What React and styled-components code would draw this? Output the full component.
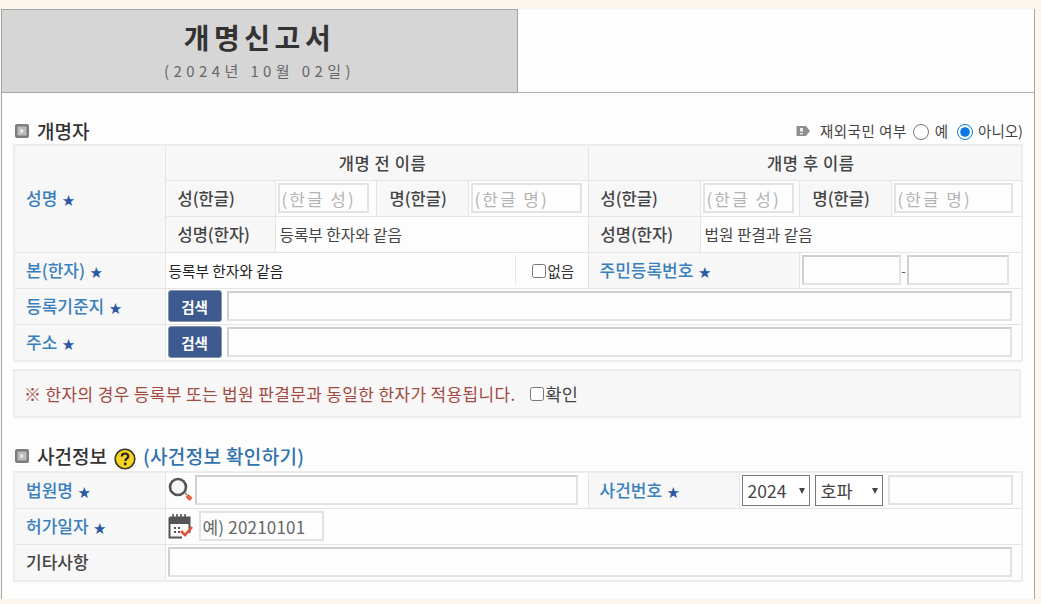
import React from "react";
import styled, { createGlobalStyle } from "styled-components";

const Global = createGlobalStyle`
  html, body { margin: 0; padding: 0; background: #fbf7ef; }
  body { font-family: "Noto Sans CJK KR", "Noto Sans", sans-serif; color: #333; }
  * { box-sizing: border-box; }
`;

const Sheet = styled.div`
  width: 1034px; height: 590px; margin: 9px 0 0 1px; background: #fdfdfd;
  border-right: 1px solid #a5a5a5; border-left: 1px solid #a5a5a5;
  display: flex; flex-direction: column;
`;
const TitleBox = styled.header`
  width: 517px; height: 84px; background: #d6d6d6; margin-left: -1px;
  border: 1px solid #a3a3a3; text-align: center; display: flex; flex-direction: column; align-items: center;
`;
const Title = styled.h1`
  margin: 7px 0 0; font-size: 28px; line-height: 40px; font-weight: 700; letter-spacing: 4.5px; color: #333;
`;
const SubTitle = styled.div`
  margin-top: 4px; font-size: 15px; line-height: 20px; letter-spacing: 4.4px; color: #666;
`;
const TitleRule = styled.div`height: 1px; background: #b5b5b5; margin: -1px 0 0 516px;`;
const Body = styled.main`padding: 26px 12px 0 11px;`;
const SectionHead = styled.div`
  height: 25px; padding: 0 0 2px 2px; display: flex; align-items: center; justify-content: space-between;
`;
const HeadLeft = styled.div`display: flex; align-items: center; gap: 7px;`;
const SectionTitle = styled.h2`margin: 0 0 0 1px; font-size: 19px; line-height: 24px; font-weight: 500; color: #333;`;
const HelpLink = styled.a`font-size: 19px; font-weight: 500; color: #2f72ad; letter-spacing: .35px; white-space: nowrap;`;
const Abroad = styled.div`
  display: flex; align-items: center; font-size: 14.5px; color: #444; margin-right: -1px;
`;
const AbroadText = styled.span`
  margin: 0 ${p => p.$mr ?? 6}px 0 ${p => p.$ml || 0}px; letter-spacing: ${p => p.$ls || 0}px; white-space: nowrap;
`;
const Radio = styled.input.attrs({ type: "radio" })`
  width: 16px; height: 16px; margin: 2px ${p => p.$mr ?? 6}px 0 0; accent-color: #0a78e0;
`;
const Check = styled.input.attrs({ type: "checkbox" })`
  width: 14px; height: 14px; margin: 2px 2px 0 0; flex: none;
`;
const Grid = styled.table`
  width: 1008px; table-layout: fixed; border-collapse: collapse; border: 2px solid #ececec;
`;
const Cell = styled.td`
  height: ${p => p.$h || 36}px; padding: 0; border: 1px solid #e4e4e4; font-size: 15px; vertical-align: middle;
  background: #fdfdfd;
`;
const Head = styled(Cell).attrs({ as: "th" })`
  font-weight: 500; font-size: 16.5px; color: #444; text-align: ${p => p.$center ? "center" : "left"};
  padding-left: ${p => p.$pl ?? 12}px; letter-spacing: ${p => p.$center ? .6 : 0}px; white-space: nowrap;
  background: #f7f7f7 repeating-conic-gradient(#f4f4f4 0 25%, #fafafa 0 50%) 0 0 / 2px 2px;
`;
const LabelHead = styled(Head)`font-size: 17px; font-weight: 500; padding-bottom: 2px;`;
const Req = styled.span`color: #3a7fbd;`;
const Star = styled.span`color: #2a58a3; font-size: 12.5px; margin-left: 5px;`;
const Value = styled.div`padding-left: 4px; font-size: 15.7px; color: #444; white-space: nowrap;`;
const Split = styled.div`display: flex; align-items: center; height: 100%;`;
const SmallValue = styled.div`flex: 1; padding-left: 3px; font-size: 14.7px; color: #222; white-space: nowrap;`;
const NoneBox = styled.label`
  width: 73px; height: 30px; border-left: 1px solid #e8e8e8; display: flex; align-items: center;
  padding-left: 16px; font-size: 14.5px; color: #333;
`;
const Inner = styled.div`display: flex; align-items: center; padding-left: ${p => p.$pl ?? 2}px;`;
const Input = styled.input`
  display: block; width: ${p => p.$w}px; height: 30px; flex: none; padding: 0 2px;
  font: 17px "Noto Sans CJK KR", sans-serif; color: #555; background: #fdfdfd;
  border: 2px solid #e2e2e2; ${p => p.$inset && "border-top-color:#d0d0d0;border-left-color:#d0d0d0;"}
  &::placeholder { color: ${p => p.$dark ? "#666" : "#b4b4b4"}; letter-spacing: ${p => p.$dark ? .2 : 2}px; opacity: 1; }
`;
const SearchBtn = styled.button`
  width: 54px; height: 32px; flex: none; margin-right: 5px; border: 1px solid #8a93a5; border-radius: 3px;
  background: #3c5a8f; color: #fff; font: 700 14.5px "Noto Sans CJK KR", sans-serif; padding: 0;
`;
const Dash = styled.span`width: 6px; color: #555; font-size: 13px; text-align: center;`;
const Notice = styled.div`
  width: 1008px; height: 49px; margin-top: 7px; padding: 0 0 1px 9px; display: flex; align-items: center;
  border: 2px solid #ececec; font-size: 17px; letter-spacing: .35px; color: #a3493f; white-space: nowrap;
  background: #f7f7f7 repeating-conic-gradient(#f4f4f4 0 25%, #fafafa 0 50%) 0 0 / 2px 2px;
`;
const Confirm = styled.label`display: flex; align-items: center; margin-left: 14px; color: #444; font-size: 17.5px; letter-spacing: 0;`;
const CaseHead = styled(SectionHead)`margin-top: 26px; justify-content: flex-start;`;
const CaseGrid = styled(Grid)`margin-top: 2px;`;
const Select = styled.select`
  width: ${p => p.$w}px; height: 31px; margin-right: 5px; flex: none; appearance: none; padding: 0 0 0 5px;
  border: 1px solid #777; border-radius: 0; color: #444; background: #fff; font: 17.5px "Noto Sans CJK KR", sans-serif;
`;
const SelectWrap = styled.div`
  position: relative; flex: none;
  &::after { content: ""; position: absolute; right: 10px; top: 13px; border: 3.5px solid transparent; border-top: 6px solid #444; border-bottom: 0; }
`;
const IconSlot = styled.span`display: flex; flex: none; margin: ${p => p.$mt || 0}px ${p => p.$mr || 0}px 0 0;`;

const Bullet = () => (
  <svg width="14" height="14" viewBox="0 0 14 14">
    <rect width="14" height="14" rx="2" fill="#7d7d7d" />
    <rect x="2.5" y="2.5" width="9" height="9" fill="#bcbcbc" />
    <path d="M5.5 4.5 9 7l-3.5 2.5z" fill="#f2f2f2" />
  </svg>
);
const Tag = () => (
  <svg width="15" height="12" viewBox="0 0 15 12">
    <path d="M1.5 1h8.5l4 5-4 5H1.5A1 1 0 0 1 .5 10V2a1 1 0 0 1 1-1z" fill="#8f8f8f" />
    <rect x="4" y="3" width="3" height="3.5" fill="#eee" />
    <rect x="4" y="8" width="3" height="1.3" fill="#eee" />
  </svg>
);
const Help = () => (
  <svg width="22" height="22" viewBox="0 0 22 22">
    <circle cx="11" cy="11" r="9.8" fill="#f7d322" stroke="#3a3a2a" strokeWidth="1.6" />
    <path d="M7.8 8.6c0-2 1.4-3.1 3.3-3.1s3.2 1 3.2 2.8c0 2.4-3 2.4-3 4.7" fill="none" stroke="#222" strokeWidth="2.2" />
    <circle cx="11.2" cy="16" r="1.4" fill="#222" />
  </svg>
);
const Magnifier = () => (
  <svg width="25" height="26" viewBox="0 0 25 26">
    <circle cx="10" cy="10" r="8" fill="#f6f6f6" stroke="#555" strokeWidth="2.6" />
    <path d="M17 16l2 2" stroke="#999" strokeWidth="2" />
    <path d="M19 18.5l4 4" stroke="#ee5a3c" strokeWidth="4" />
  </svg>
);
const Calendar = () => (
  <svg width="25" height="27" viewBox="0 0 25 27">
    <path d="M2 4h19v7H2z" fill="#555" />
    <path d="M5 1v5M9 1v5M13 1v5M17 1v5" stroke="#555" strokeWidth="1.6" />
    <path d="M1.5 4.5h20V20M1.5 4.5V24.5H14" fill="none" stroke="#555" strokeWidth="2" />
    <path d="M6 14h2v2H6zM10 14h2v2h-2zM6 18h2v2H6zM10 18h2v2h-2z" fill="#555" />
    <path d="M13 18l4 4 7-8" fill="none" stroke="#e8503a" strokeWidth="2.6" />
  </svg>
);

const Label = ({ children, h, rowSpan, colSpan }) => (
  <LabelHead $pl={11} $h={h} rowSpan={rowSpan} colSpan={colSpan}>
    <Req>{children}</Req><Star>★</Star>
  </LabelHead>
);

export default function App() {
  return (
    <>
      <Global />
      <Sheet>
        <TitleBox>
          <Title>개명신고서</Title>
          <SubTitle>(2024년 10월 02일)</SubTitle>
        </TitleBox>
        <TitleRule />
        <Body>
          <SectionHead>
            <HeadLeft><Bullet /><SectionTitle>개명자</SectionTitle></HeadLeft>
            <Abroad>
              <Tag />
              <AbroadText $ml={9} $mr={6} $ls={0.5}>재외국민 여부</AbroadText>
              <Radio name="abroad" $mr={6} />
              <AbroadText $mr={9}>예</AbroadText>
              <Radio name="abroad" $mr={5} defaultChecked />
              <AbroadText $mr={0}>아니오)</AbroadText>
            </Abroad>
          </SectionHead>
          <Grid>
            <colgroup>
              {[151, 110, 101, 92, 120, 112, 99, 92, 131].map((w, i) => <col key={i} width={w} />)}
            </colgroup>
            <tbody>
              <tr>
                <Label rowSpan={3} h={35}>성명</Label>
                <Head $center colSpan={4} $h={35}>개명 전 이름</Head>
                <Head $center colSpan={4} $h={35}>개명 후 이름</Head>
              </tr>
              <tr>
                <Head>성(한글)</Head>
                <Cell><Inner><Input $w={91} placeholder="(한글 성)" /></Inner></Cell>
                <Head $pl={13}>명(한글)</Head>
                <Cell><Inner><Input $w={111} placeholder="(한글 명)" /></Inner></Cell>
                <Head>성(한글)</Head>
                <Cell><Inner><Input $w={91} placeholder="(한글 성)" /></Inner></Cell>
                <Head $pl={13}>명(한글)</Head>
                <Cell><Inner><Input $w={119} placeholder="(한글 명)" /></Inner></Cell>
              </tr>
              <tr>
                <Head>성명(한자)</Head>
                <Cell colSpan={3}><Value>등록부 한자와 같음</Value></Cell>
                <Head>성명(한자)</Head>
                <Cell colSpan={3}><Value>법원 판결과 같음</Value></Cell>
              </tr>
              <tr>
                <Label>본(한자)</Label>
                <Cell colSpan={4}>
                  <Split>
                    <SmallValue>등록부 한자와 같음</SmallValue>
                    <NoneBox><Check />없음</NoneBox>
                  </Split>
                </Cell>
                <Label colSpan={2}>주민등록번호</Label>
                <Cell colSpan={2}>
                  <Inner><Input $w={99} $inset /><Dash>-</Dash><Input $w={102} $inset /></Inner>
                </Cell>
              </tr>
              <tr>
                <Label>등록기준지</Label>
                <Cell colSpan={8}>
                  <Inner><SearchBtn>검색</SearchBtn><Input $w={785} $inset /></Inner>
                </Cell>
              </tr>
              <tr>
                <Label h={37}>주소</Label>
                <Cell colSpan={8}>
                  <Inner><SearchBtn>검색</SearchBtn><Input $w={785} $inset /></Inner>
                </Cell>
              </tr>
            </tbody>
          </Grid>
          <Notice>
            ※ 한자의 경우 등록부 또는 법원 판결문과 동일한 한자가 적용됩니다.
            <Confirm><Check />확인</Confirm>
          </Notice>
          <CaseHead>
            <HeadLeft>
              <Bullet /><SectionTitle>사건정보</SectionTitle>
              <IconSlot $mt={7}><Help /></IconSlot>
              <HelpLink>(사건정보 확인하기)</HelpLink>
            </HeadLeft>
          </CaseHead>
          <CaseGrid>
            <colgroup>
              {[151, 423, 151, 283].map((w, i) => <col key={i} width={w} />)}
            </colgroup>
            <tbody>
              <tr>
                <Label>법원명</Label>
                <Cell>
                  <Inner><IconSlot $mr={2}><Magnifier /></IconSlot><Input $w={383} $inset /></Inner>
                </Cell>
                <Label>사건번호</Label>
                <Cell>
                  <Inner>
                    <SelectWrap><Select $w={68} defaultValue="2024"><option>2024</option></Select></SelectWrap>
                    <SelectWrap><Select $w={68} defaultValue="호파"><option>호파</option></Select></SelectWrap>
                    <Input $w={125} />
                  </Inner>
                </Cell>
              </tr>
              <tr>
                <Label>허가일자</Label>
                <Cell colSpan={3}>
                  <Inner><IconSlot $mr={6}><Calendar /></IconSlot><Input $w={125} $dark placeholder="예) 20210101" /></Inner>
                </Cell>
              </tr>
              <tr>
                <LabelHead $pl={11} $h={37}>기타사항</LabelHead>
                <Cell colSpan={3} $h={37}><Inner><Input $w={844} $inset /></Inner></Cell>
              </tr>
            </tbody>
          </CaseGrid>
        </Body>
      </Sheet>
    </>
  );
}
